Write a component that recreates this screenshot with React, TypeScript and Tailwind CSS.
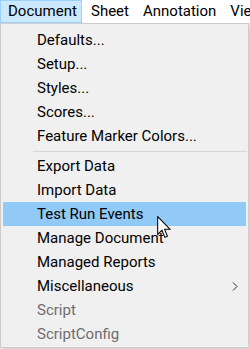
const items: { label: string; disabled?: boolean; active?: boolean; sub?: boolean; sep?: boolean }[] = [
  { label: "Defaults..." },
  { label: "Setup..." },
  { label: "Styles..." },
  { label: "Scores..." },
  { label: "Feature Marker Colors..." },
  { label: "", sep: true },
  { label: "Export Data" },
  { label: "Import Data" },
  { label: "Test Run Events", active: true },
  { label: "Manage Document" },
  { label: "Managed Reports" },
  { label: "Miscellaneous", sub: true },
  { label: "Script", disabled: true },
  { label: "ScriptConfig", disabled: true },
];

// windows arrow pointer, drawn at ~125%
function Cursor() {
  return (
    <svg className="absolute left-[154px] top-[14px] z-10" width="14" height="23" viewBox="0 0 12 20">
      <path d="M0.5 0.5 L0.5 16 L4.2 12.4 L6.8 18.6 L9 17.6 L6.5 11.6 L11.3 11.6 Z" fill="#fff" stroke="#000" strokeWidth="0.9" strokeLinejoin="miter" />
    </svg>
  );
}

export default function App() {
  return (
    <div className="relative h-[349px] w-[250px] overflow-hidden bg-white text-[15px] text-[#000] [font-family:Roboto,sans-serif]">
      <div className="flex h-[23px] items-center whitespace-nowrap">
        <div className="flex h-[23px] w-[82px] shrink-0 items-center border border-[#99d1ff] bg-[#cce8ff] pl-[7px]">Document</div>
        <div className="pl-[9px]">Sheet</div>
        <div className="pl-[14px]">Annotation</div>
        <div className="pl-[14px]">View</div>
      </div>
      <div className="flex h-[325px] w-[249px] flex-col border border-[#cccccc] bg-[#f0f0f0] pb-[1px] pt-[4px] shadow-[2px_2px_3px_rgba(0,0,0,0.2)]">
        {items.map((it, i) =>
          it.sep ? (
            <div key={i} className="flex h-[6px] items-center pl-[32px] pr-[1px]">
              <div className="h-px w-full bg-[#d7d7d7]" />
            </div>
          ) : (
            <div
              key={i}
              className={`relative mx-[2px] flex h-[24px] shrink-0 items-center pl-[34px] ${it.active ? "bg-[#91c9f7]" : ""} ${it.disabled ? "text-[#6d6d6d]" : ""}`}
            >
              {it.label}
              {it.sub && (
                <svg className="absolute left-[229px] top-[8px]" width="6" height="9" viewBox="0 0 6 9">
                  <path d="M1 0.5 L5 4.5 L1 8.5" fill="none" stroke="#333" strokeWidth="1" />
                </svg>
              )}
              {it.active && <Cursor />}
            </div>
          )
        )}
      </div>
    </div>
  );
}
